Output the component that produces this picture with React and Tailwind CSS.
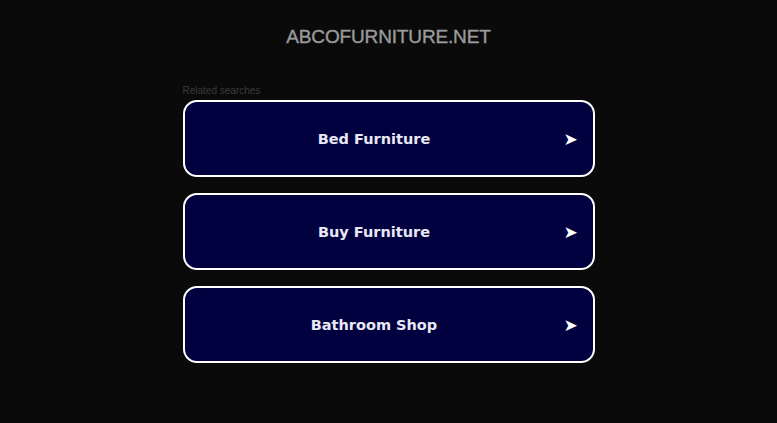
import React from 'react';

const links = ['Bed Furniture', 'Buy Furniture', 'Bathroom Shop'];

export default function App() {
    return (
        <div className="min-h-[423px] bg-[#0a0a0a] flex flex-col items-center font-['Liberation_Sans',Arial,sans-serif]">
            <h1 className="mt-[26px] text-[19px] leading-[22px] tracking-[-0.15px] text-[#9a9a9a] [-webkit-text-stroke:0.4px_#9a9a9a]">
                ABCOFURNITURE.NET
            </h1>

            <div className="mt-[37px] w-[412px]">
                <div className="text-[10px] leading-[12px] text-[#3a3a3a]">Related searches</div>
                <div className="mt-[3px] flex flex-col gap-[16px]">
                    {links.map((label) => (
                        <a
                            key={label}
                            href="#"
                            className="h-[77px] flex items-center bg-[#01013f] border-2 border-white rounded-[14px] pr-[17px] text-[#e8e8f4] font-['DejaVu_Sans',Verdana,sans-serif]"
                        >
                            <span className="flex-1 text-center font-bold text-[14.5px] pt-[2px]">{label}</span>
                            <span className="w-3 text-center text-[17px] leading-none text-white pt-[1px]">➤</span>
                        </a>
                    ))}
                </div>
            </div>
        </div>
    );
}
